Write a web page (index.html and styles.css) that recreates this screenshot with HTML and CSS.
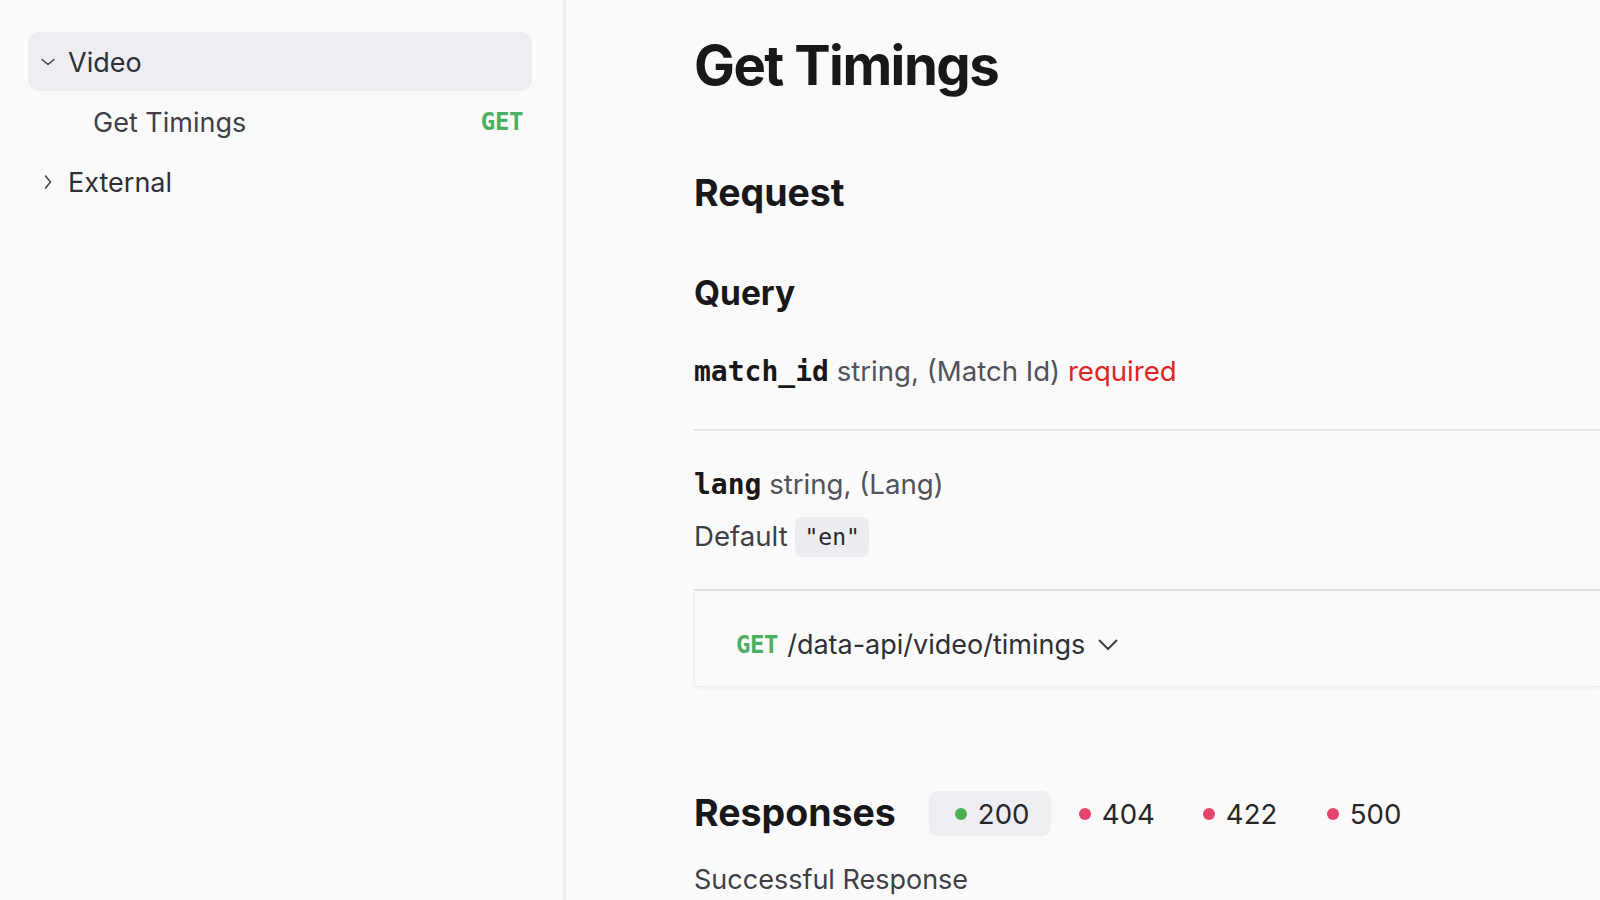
FILE: index.html
```html
<!DOCTYPE html>
<html lang="en">
<head>
<meta charset="utf-8">
<title>Get Timings</title>
<link rel="stylesheet" href="styles.css">
</head>
<body>
<div class="layout">
  <aside class="sidebar">
    <nav class="nav">
      <div class="nav-item nav-item--active">
        <svg class="chev" width="16" height="16" viewBox="0 0 16 16"><path d="M2 5.5 L8 10.5 L14 5.5" /></svg>
        <span>Video</span>
      </div>
      <div class="nav-item nav-item--child">
        <span>Get Timings</span>
        <span class="method">GET</span>
      </div>
      <div class="nav-item">
        <svg class="chev" width="16" height="16" viewBox="0 0 16 16"><path d="M5.5 2 L10.5 8 L5.5 14" /></svg>
        <span>External</span>
      </div>
    </nav>
  </aside>
  <main class="content">
    <h1 class="page-title">Get Timings</h1>
    <h2 class="section-title section-title--request">Request</h2>
    <h3 class="sub-title">Query</h3>
    <div class="param param--first">
      <div class="param-line"><code class="param-name">match_id</code> <span class="param-meta">string, (Match Id)</span> <span class="param-req">required</span></div>
    </div>
    <div class="param param--second">
      <div class="param-line"><code class="param-name">lang</code> <span class="param-meta">string, (Lang)</span></div>
      <div class="param-default">Default <code class="inline-code">"en"</code></div>
    </div>
    <div class="endpoint">
      <span class="endpoint-method">GET</span>
      <span class="endpoint-path">/data-api/video/timings</span>
      <svg class="endpoint-chev" width="20" height="12" viewBox="0 0 20 12"><path d="M1.5 1.5 L10 10 L18.5 1.5" /></svg>
    </div>
    <div class="responses-head">
      <h2 class="section-title section-title--responses">Responses</h2>
      <div class="tabs">
        <div class="tab tab--active"><span class="dot dot--ok"></span><span>200</span></div>
        <div class="tab"><span class="dot dot--err"></span><span>404</span></div>
        <div class="tab"><span class="dot dot--err"></span><span>422</span></div>
        <div class="tab"><span class="dot dot--err"></span><span>500</span></div>
      </div>
    </div>
    <p class="response-desc">Successful Response</p>
  </main>
</div>
</body>
</html>
```
FILE: styles.css
```css
* { box-sizing: border-box; }

html, body {
  margin: 0;
  padding: 0;
  height: 100%;
}

body {
  background: #fafafa;
  font-family: Inter, "Noto Sans", "Liberation Sans", sans-serif;
  color: #3f3f46;
  overflow: hidden;
}

.layout {
  display: flex;
  width: 1600px;
  height: 900px;
}

/* Sidebar */
.sidebar {
  width: 566px;
  flex: 0 0 566px;
  border-right: 2px solid #ebebed;
  padding: 32px 32px 0 28px;
  box-shadow: inset -4px 0 0 -2px #f4f4f5;
}

.nav {
  display: flex;
  flex-direction: column;
  gap: 1px;
}

.nav-item {
  display: flex;
  align-items: center;
  gap: 12px;
  height: 59px;
  padding: 1px 9px 0 12px;
  border-radius: 11px;
  font-size: 27px;
  color: #2f2f36;
}

.nav-item--active {
  background: #eeeef2;
}

.nav-item--child {
  padding-left: 65px;
  color: #3f3f46;
}

.chev {
  flex: 0 0 16px;
  fill: none;
  stroke: #3f3f46;
  stroke-width: 1.5;
  stroke-linecap: round;
  stroke-linejoin: round;
}

.method {
  margin-left: auto;
  font-family: "DejaVu Sans Mono", "Liberation Mono", monospace;
  font-weight: 700;
  font-size: 24px;
  color: #4caf62;
  letter-spacing: -0.4px;
}

/* Content */
.content {
  flex: 1;
  padding: 30px 0 0 128px;
  min-width: 0;
}

.page-title {
  margin: 0;
  font-size: 54.5px;
  line-height: 70px;
  font-weight: 700;
  color: #18181b;
  letter-spacing: -1.5px;
}

.section-title {
  margin: 0;
  font-size: 37.5px;
  line-height: 44px;
  font-weight: 700;
  color: #18181b;
  letter-spacing: 0;
}

.section-title--request {
  margin-top: 71px;
}

.sub-title {
  margin: 58px 0 0;
  font-size: 33.5px;
  line-height: 40px;
  font-weight: 700;
  color: #18181b;
  letter-spacing: 0;
}

.param--first {
  margin-top: 35.5px;
  padding-bottom: 35.5px;
  border-bottom: 2px solid #e3e3e6;
}

.param--second {
  padding-top: 30.5px;
}

.param-line {
  font-size: 27.6px;
  line-height: 44px;
  white-space: nowrap;
}

.param-name {
  font-family: "DejaVu Sans Mono", "Liberation Mono", monospace;
  font-weight: 700;
  font-size: 28px;
  color: #18181b;
  letter-spacing: 0;
}

.param-meta {
  color: #52525b;
}

.param-req {
  color: #dc2626;
}

.param-default {
  margin-top: 7px;
  font-size: 27.6px;
  line-height: 44px;
  color: #3f3f46;
}

.inline-code {
  display: inline-block;
  font-family: "DejaVu Sans Mono", "Liberation Mono", monospace;
  font-size: 23px;
  line-height: 30px;
  padding: 5px 9px;
  margin-left: 0;
  background: #ededf1;
  border-radius: 7px;
  color: #27272a;
  vertical-align: 1px;
}

.endpoint {
  margin-top: 31.5px;
  display: flex;
  align-items: center;
  height: 98px;
  padding: 34px 0 21px 41px;
  border-top: 2px solid #dddde6;
  border-left: 1px solid #ececf0;
  border-bottom: 1px solid #ececef;
  background: #fafafa;
  box-shadow: 0 2px 4px rgba(0, 0, 0, 0.05);
  white-space: nowrap;
}

.endpoint-method {
  font-family: "DejaVu Sans Mono", "Liberation Mono", monospace;
  font-weight: 700;
  font-size: 24px;
  color: #4caf62;
  letter-spacing: -0.4px;
  margin-right: 9px;
}

.endpoint-path {
  font-size: 27px;
  line-height: 40px;
  color: #2f2f36;
}

.endpoint-chev {
  margin-left: 13px;
  fill: none;
  stroke: #3f3f46;
  stroke-width: 2;
  stroke-linecap: round;
  stroke-linejoin: round;
}

.responses-head {
  margin-top: 104px;
  display: flex;
  align-items: flex-start;
  gap: 33px;
}

.section-title--responses {
  margin-top: 0;
}

.tabs {
  display: flex;
  gap: 2px;
}

.tab {
  display: flex;
  align-items: center;
  gap: 11px;
  height: 45px;
  width: 122px;
  padding: 0 0 0 26px;
  border-radius: 9px;
  font-size: 27.6px;
  color: #27272a;
}

.tab--active {
  background: #eeeef2;
}

.dot {
  width: 12px;
  height: 12px;
  border-radius: 50%;
  flex: 0 0 12px;
}

.dot--ok {
  background: #4cb050;
}

.dot--err {
  background: #e5456b;
}

.response-desc {
  margin: 21.5px 0 0;
  font-size: 27px;
  line-height: 44px;
  color: #3f3f46;
}
```
